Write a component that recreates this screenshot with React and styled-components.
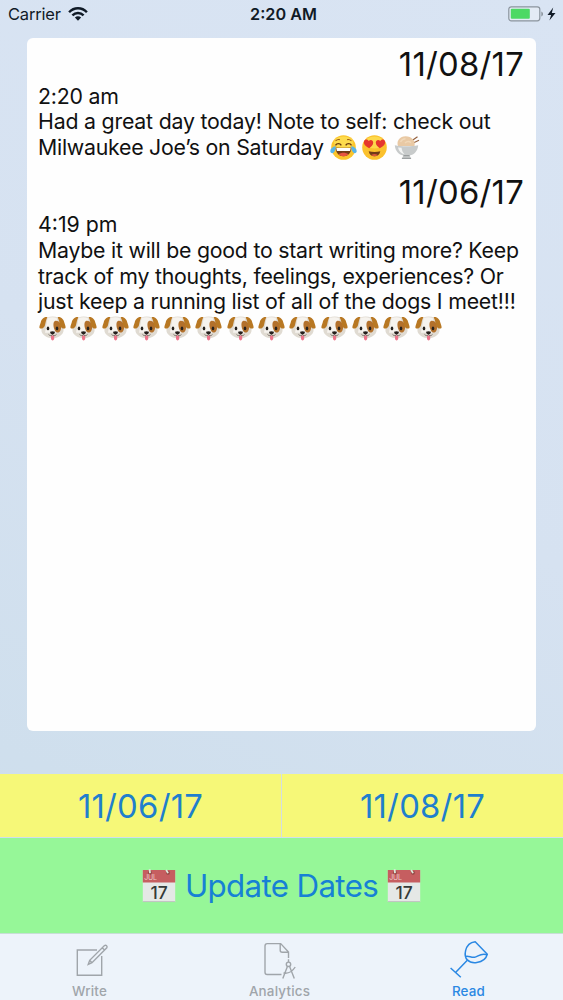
import styled, { createGlobalStyle } from 'styled-components';

const GlobalStyle = createGlobalStyle`
  body {
    margin: 0;
    font-family: Inter, "Liberation Sans", sans-serif;
  }
`;

const Screen = styled.div`
  width: 563px;
  height: 1000px;
  display: flex;
  flex-direction: column;
  overflow: hidden;
  background: linear-gradient(205deg, #d9e4f3 0%, #d6e2f1 45%, #cfdfed 80%, #cfdcef 100%);
`;

const StatusBar = styled.header`
  display: grid;
  grid-template-columns: 1fr auto 1fr;
  align-items: center;
  height: 28px;
  padding: 0 6px 0 8px;
  box-sizing: border-box;
  color: #101a26;
`;

const Carrier = styled.div`
  display: flex;
  align-items: center;
  gap: 7px;
  font-size: 16.5px;
  letter-spacing: -0.2px;
`;

const Clock = styled.div`
  padding-left: 2px;
  font-size: 16.2px;
  font-weight: 600;
`;

const Battery = styled.div`
  display: flex;
  justify-content: flex-end;
`;

const Journal = styled.main`
  height: 693px;
  margin: 10px 27px 43px;
  padding: 6.6px 12px 0 11px;
  box-sizing: border-box;
  border-radius: 6px;
  background: #fefefe;
  color: #111;
`;

const Entry = styled.article`
  margin-bottom: 12px;
`;

const EntryDate = styled.h2`
  margin: 0;
  font-size: 32.8px;
  font-weight: 400;
  line-height: 39px;
  letter-spacing: 0.25px;
  text-align: right;
`;

const Line = styled.div`
  display: flex;
  align-items: center;
  height: 25.8px;
  font-size: 21.3px;
  line-height: 25.8px;
  letter-spacing: ${props => props.$spacing || '-0.2px'};
  white-space: pre;
`;

const Emojis = styled.span`
  display: inline-flex;
  gap: 4.3px;
  margin-left: ${props => props.$indent || '0'};
  padding-bottom: ${props => props.$raise || '0'};

  svg {
    width: 27px;
    height: 27px;
  }
`;

const Dates = styled.div`
  display: grid;
  grid-template-columns: 281px 1fr;
  gap: 1px;
  height: 63px;
  background: #d3dde2;
`;

const DateButton = styled.button`
  padding: 0;
  border: 0;
  background: #f6f878;
  color: #1f7fcd;
  font-family: inherit;
  font-size: 32.8px;
  line-height: 62px;
  letter-spacing: 0.25px;
`;

const UpdateButton = styled.button`
  display: flex;
  align-items: center;
  justify-content: center;
  gap: 9px;
  height: 95px;
  margin-top: 1px;
  padding: 0;
  border: 0;
  background: #96f798;
  color: #1681d5;
  font-family: inherit;
  font-size: 31.3px;
  letter-spacing: -0.65px;
`;

const TabBar = styled.nav`
  display: grid;
  grid-template-columns: 179px 201px 177px;
  flex: 1;
  background: #edf3fa;
  border-top: 1px solid #c7dfd5;
`;

const Tab = styled.a`
  display: flex;
  flex-direction: column;
  align-items: center;
  padding-top: 4px;
  color: ${props => (props.$active ? '#2b88e3' : '#a0a5aa')};
  font-size: 13.4px;
  font-weight: 500;
  line-height: 18px;
  letter-spacing: 0.2px;

  svg {
    width: 44px;
    height: 44px;
  }
`;

const WifiIcon = () => (
  <svg width="20" height="14" viewBox="0 0 20 14" fill="none" stroke="currentColor" strokeWidth="2.4">
    <path d="M1.1 5.2C6-.1 14-.1 18.9 5.2" />
    <path d="M4.4 8.4c3.2-3.2 8-3.2 11.2 0" />
    <path d="M10 13.7 6.9 10.6c1.8-1.7 4.4-1.7 6.2 0z" fill="currentColor" stroke="none" />
  </svg>
);

const BatteryIcon = () => (
  <svg width="49" height="16" viewBox="0 0 49 16">
    <rect x=".8" y=".8" width="31" height="14" rx="2.5" fill="#e3ebf5" stroke="#8b949d" strokeWidth="1.2" />
    <rect x="2.8" y="2.8" width="19" height="10" rx="1" fill="#4cd964" />
    <path d="M33.3 5.5c2.3.7 2.3 4.3 0 5z" fill="#8b949d" />
    <path d="M45.2 1.5 39.5 9h3.6l-1.7 5.5L47.5 7h-3.7z" fill="#101a26" />
  </svg>
);

const JoyEmoji = () => (
  <svg viewBox="0 0 27 27">
    <circle cx="13.5" cy="13.5" r="12.3" fill="#fbc52d" />
    <ellipse cx="13.5" cy="8.5" rx="9.5" ry="6" fill="#fddb4d" />
    <path d="M5.5 7c1.2-1.3 2.7-1.8 4.3-1.4M17.2 5.6c1.6-.4 3.1.1 4.3 1.4" fill="none" stroke="#9a5a14" strokeWidth="1.1" />
    <path d="M5.5 11.4c1.3-2.4 4.5-2.4 5.8 0M15.7 11.4c1.3-2.4 4.5-2.4 5.8 0" fill="none" stroke="#6b3a10" strokeWidth="1.4" />
    <path d="M5.5 13.8h16c-.4 5.2-3.5 8.5-8 8.5s-7.6-3.3-8-8.5z" fill="#713b17" />
    <path d="M6.3 14h14.4l-.6 3H6.9z" fill="#fff" />
    <path d="M8.7 20.3c2.5-2 7.1-2 9.6 0-2.5 2.7-7.1 2.7-9.6 0z" fill="#e95443" />
    <path d="M5.8 12.3c-3.3.3-5.4 2.5-5.5 4.7-.1 1.9 2 2.9 3.5 1.5 1.3-1.3 1.9-3.5 2-6.2zM21.2 12.3c3.3.3 5.4 2.5 5.5 4.7.1 1.9-2 2.9-3.5 1.5-1.3-1.3-1.9-3.5-2-6.2z" fill="#58b5e9" />
  </svg>
);

const HeartEyesEmoji = () => (
  <svg viewBox="0 0 27 27">
    <circle cx="13.5" cy="13.5" r="12.3" fill="#fbc12d" />
    <ellipse cx="13.5" cy="8.5" rx="9.5" ry="6" fill="#fdd94b" />
    <path d="M8.2 14.2C4.8 12.8 2.2 10 3 7.3 3.8 4.8 6.8 5 7.8 7.1c1.5-1.9 4.3-1.2 4.4 1.4.1 2.4-2 4.4-4 5.7z" fill="#e5372d" />
    <path d="M18.8 14.2c3.4-1.4 6-4.2 5.2-6.9-.8-2.5-3.8-2.3-4.8-.2-1.5-1.9-4.3-1.2-4.4 1.4-.1 2.4 2 4.4 4 5.7z" fill="#e5372d" />
    <path d="M7.7 17.3c3.6 1 8 1 11.6 0-.6 3.3-2.7 5-5.8 5s-5.2-1.7-5.8-5z" fill="#713b17" />
    <path d="M10.2 21c2-1.3 4.6-1.3 6.6 0-2 1.6-4.6 1.6-6.6 0z" fill="#d9583a" />
  </svg>
);

const RiceEmoji = () => (
  <svg viewBox="0 0 27 27">
    <path d="m17 8 7.5-5.3M18 10l8-3.8" stroke="#94613f" strokeWidth="1.2" />
    <path d="M5 12C3 6.8 7 2.3 12.5 2.2 18.5 2.1 22.7 6.8 21.5 12z" fill="#e9c9a4" />
    <path d="M7.5 8c1-2 2.7-3.2 5-3.2M12 9c2-2 4-2 6-.4" fill="none" stroke="#f1d8b8" strokeWidth="1.5" />
    <path d="M1.8 11.3c6.8 1.3 16.6 1.3 23.4 0-.4 5.7-4 9.5-8.5 10.3l1.4 3.1H8.9l1.4-3.1c-4.5-.8-8.1-4.6-8.5-10.3z" fill="#c8cbcb" />
    <path d="M5 13.5c.7 3.8 3.1 6.2 6.6 6.8-2-2-2.8-4-3-6.5z" fill="#f3f4f3" />
    <path d="M8.9 24.3h9.2M10.5 21.7h6" stroke="#8f9495" strokeWidth="1" />
  </svg>
);

const DogEmoji = () => (
  <svg viewBox="0 0 27 27">
    <path d="M8 2.7C12 1 16 1.1 19.2 2.8c3.4 2.2 5.4 7 5.4 12.2.1 5-6.1 8.3-11.1 8.3S2.4 20 2.4 15.3C2.4 10 4.5 5 8 2.7z" fill="#e0dbd2" />
    <path d="M8.5 3.3c3-1.5 7-1.5 9.8.1l-1 14.3H6z" fill="#f6f3ee" />
    <path d="M15.6 6.2c3.4-1.4 6.4 1.8 6.5 6.1.1 3.8-2.4 6.3-4.7 4.9-2.6-1.6-4.2-9.4-1.8-11z" fill="#b3712c" />
    <path d="M8.4 2.2C4.7 1.6 2.5 4.5 1.7 7.4.9 10 .1 11.5.5 12.9c1.7 1.6 4.6 0 5.4-2.5.6-2.1 1-5.7 2.5-8.2zM18.6 2.2c3.7-.6 5.9 2.3 6.7 5.2.8 2.6 1.6 4.1 1.2 5.5-1.7 1.6-4.6 0-5.4-2.5-.6-2.1-1-5.7-2.5-8.2z" fill="#b87823" />
    <ellipse cx="9" cy="13.4" rx="1.3" ry="1.9" fill="#25201d" />
    <ellipse cx="18" cy="13.4" rx="1.3" ry="1.9" fill="#25201d" />
    <path d="M12 20.6h3.2v3c0 2.4-3.2 2.4-3.2 0z" fill="#ed758b" />
    <path d="M9.5 19.4c1.5 1.7 3.1 1.5 4 .3.9 1.2 2.5 1.4 4-.3" fill="none" stroke="#645850" strokeWidth=".8" />
    <path d="M11.1 16.8c1.4-.8 3.4-.8 4.8 0 .2 1.6-1.4 2.8-2.4 2.8s-2.6-1.2-2.4-2.8z" fill="#241e1b" />
  </svg>
);

const CalendarEmoji = () => (
  <svg width="34" height="34" viewBox="0 0 34 34">
    <path d="M.8 1h32.4v32H.8z" fill="#e5e8e6" />
    <path d="M.8 1h32.4v12.4H.8z" fill="#c65e60" />
    <path d="M.8 32.6h32.4" stroke="#bdc3be" />
    <circle cx="8" cy="3.8" r="2.1" fill="#9b4d4a" />
    <circle cx="26" cy="3.8" r="2.1" fill="#9b4d4a" />
    <path d="M8 4.2 7.6.2M26 4.2 24.2.8" stroke="#dce9db" strokeWidth="1.8" />
    <text x="2.3" y="11.2" fontSize="7" fill="#edc9c8" letterSpacing="-.2">JUL</text>
    <text x="17" y="30.2" fontSize="17.5" fontWeight="500" fill="#353a38" textAnchor="middle" letterSpacing="-.2">17</text>
  </svg>
);

const WriteIcon = () => (
  <svg viewBox="0 0 44 44" fill="none" stroke="currentColor" strokeWidth="1.4">
    <path d="M29 12H9.3v25.3h24.4V18" />
    <path d="m20.2 26.5 1.5-4.2L36.5 7.5c1.5-1 3.3.7 2.3 2.3L24 24.7zM34.2 9.8l2.3 2.3M21.7 22.3l2.3 2.4" />
  </svg>
);

const AnalyticsIcon = () => (
  <svg viewBox="0 0 44 44" fill="none" stroke="currentColor" strokeWidth="1.4">
    <path d="M23.5 36.5H9.2c-1.6 0-2.2-.7-2.2-2.2V7.9c0-1.6.7-2.3 2.2-2.3h13.5l7.8 8.5v6M22.2 5.8v6.5c0 1.4.6 2 2 2h6.1" />
    <circle cx="30.5" cy="26.3" r="2.2" />
    <path d="M30.5 21.2v2.7M29.5 28.3 24.8 40.5M31.5 28.3l4.8 12.2M25.5 35c4.8.8 8.8-1.3 11.7-6" />
  </svg>
);

const WineIcon = () => (
  <svg viewBox="0 0 44 44" fill="none" stroke="currentColor" strokeWidth="1.5" strokeLinejoin="round">
    <path d="M28.2 3.7c-5 .5-8.5 4.2-9.6 9-.8 3.5-.8 6.7 1.7 9.2s5.8 3.2 9.5 2.6c5.3-.8 9.2-3.3 10.5-8.3z" />
    <path d="M18.2 18.5c3.7-1.2 6.2 1.7 10 .6 3.5-1 5.3-4.3 12-2.4M20.3 22.3 8.8 34.3M3.6 30l10.2 9.2" />
  </svg>
);

const dogs = Array.from({ length: 13 }, (_, i) => i);

const App = () => {
  return (
    <>
      <GlobalStyle />
      <Screen>
        <StatusBar>
          <Carrier>
            <span>Carrier</span>
            <WifiIcon />
          </Carrier>
          <Clock>2:20 AM</Clock>
          <Battery>
            <BatteryIcon />
          </Battery>
        </StatusBar>
        <Journal>
          <Entry>
            <EntryDate>11/08/17</EntryDate>
            <Line>2:20 am</Line>
            <Line>Had a great day today! Note to self: check out</Line>
            <Line $spacing="-0.25px">
              Milwaukee Joe’s on Saturday
              <Emojis $indent="6.5px" $raise="2px">
                <JoyEmoji />
                <HeartEyesEmoji />
                <RiceEmoji />
              </Emojis>
            </Line>
          </Entry>
          <Entry>
            <EntryDate>11/06/17</EntryDate>
            <Line $spacing="0">4:19 pm</Line>
            <Line $spacing="-0.23px">Maybe it will be good to start writing more? Keep</Line>
            <Line $spacing="-0.23px">track of my thoughts, feelings, experiences? Or</Line>
            <Line>just keep a running list of all of the dogs I meet!!!</Line>
            <Line>
              <Emojis $indent="1px">
                {dogs.map(dog => (
                  <DogEmoji key={dog} />
                ))}
              </Emojis>
            </Line>
          </Entry>
        </Journal>
        <Dates>
          <DateButton>11/06/17</DateButton>
          <DateButton>11/08/17</DateButton>
        </Dates>
        <UpdateButton>
          <CalendarEmoji />
          <span>Update Dates</span>
          <CalendarEmoji />
        </UpdateButton>
        <TabBar>
          <Tab>
            <WriteIcon />
            Write
          </Tab>
          <Tab>
            <AnalyticsIcon />
            Analytics
          </Tab>
          <Tab $active>
            <WineIcon />
            Read
          </Tab>
        </TabBar>
      </Screen>
    </>
  );
};

export default App;
